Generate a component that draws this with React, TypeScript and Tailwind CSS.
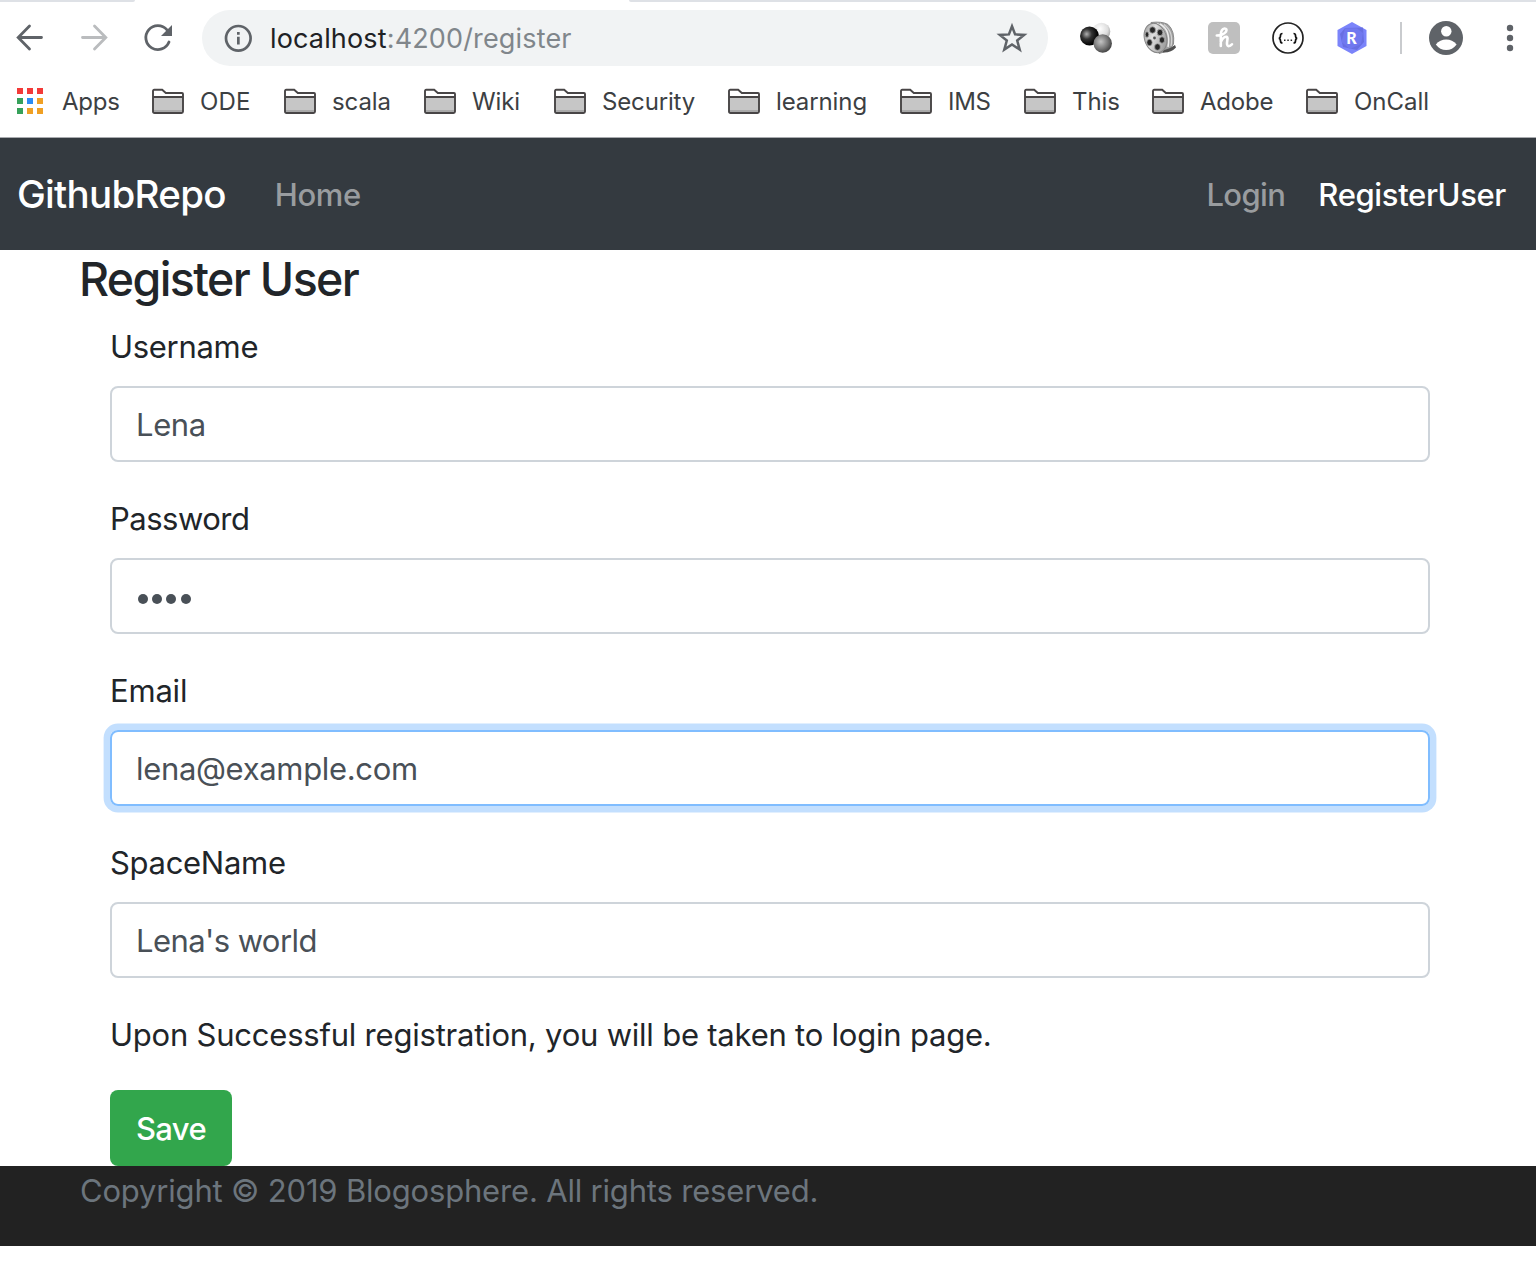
import React from "react";

const folders = [
  { name: "ODE", slot: "w-[132px]", text: "tracking-[0.2px]" },
  { name: "scala", slot: "w-[140px]", text: "tracking-[-0.1px]" },
  { name: "Wiki", slot: "w-[130px]", text: "tracking-[-0.1px]" },
  { name: "Security", slot: "w-[174px]", text: "tracking-[-0.15px]" },
  { name: "learning", slot: "w-[172px]", text: "tracking-[-0.1px]" },
  { name: "IMS", slot: "w-[124px]", text: "tracking-[-0.3px]" },
  { name: "This", slot: "w-[128px]", text: "tracking-[-0.1px]" },
  { name: "Adobe", slot: "w-[154px]", text: "tracking-[-0.2px]" },
  { name: "OnCall", slot: "w-[140px]", text: "tracking-[0px]" },
];

function FolderIcon() {
  return (
    <svg width="32" height="26" viewBox="0 0 32 26" className="shrink-0">
      <path d="M1 23V3Q1 1.800 2.200 1.800H10L14 5H29.500Q31 5 31 6.500V23Q31 25 29.500 25H2.500Q1 25 1 23Z" fill="#fff" />
      <path d="M1 9H31V24H1Z" fill="#c6c6c6" />
      <path d="M1 22H31V24H1Z" fill="#a9a9a9" />
      <path d="M1 9H31M1 23.500V3Q1 1.800 2.200 1.800H10.200L13.800 5H30Q31 5 31 6V23.500Q31 25 29.500 25H2.500Q1 25 1 23.500Z" fill="none" stroke="#484546" strokeWidth="1.900" />
    </svg>
  );
}

const dots = ["#f33a38", "#f33a38", "#f33a38", "#36a15a", "#2b8cf5", "#f0a024", "#36a15a", "#f0a024", "#f0a024"];

function AppsIcon() {
  return (
    <svg width="26" height="26" viewBox="0 0 26 26" className="shrink-0">
      {dots.map((c, i) => (
        <rect key={i} x={(i % 3) * 10} y={Math.floor(i / 3) * 10} width="6" height="6" fill={c} />
      ))}
    </svg>
  );
}

function Spheres() {
  return (
    <svg width="32" height="32" viewBox="0 0 32 32">
      <defs>
        <radialGradient id="s1" cx="0.35" cy="0.4" r="0.6"><stop offset="0" stopColor="#b0b0b0" /><stop offset="0.45" stopColor="#333" /><stop offset="1" stopColor="#000" /></radialGradient>
        <radialGradient id="s2" cx="0.4" cy="0.35" r="0.65"><stop offset="0" stopColor="#fff" /><stop offset="0.7" stopColor="#ddd" /><stop offset="1" stopColor="#aaa" /></radialGradient>
        <radialGradient id="s3" cx="0.4" cy="0.4" r="0.65"><stop offset="0" stopColor="#c4c4c4" /><stop offset="0.6" stopColor="#777" /><stop offset="1" stopColor="#3c3c3c" /></radialGradient>
      </defs>
      <circle cx="21.500" cy="9.500" r="8.800" fill="url(#s2)" />
      <circle cx="9.500" cy="14" r="9.500" fill="url(#s1)" />
      <circle cx="22.700" cy="21.500" r="9.200" fill="url(#s3)" />
    </svg>
  );
}

function FilmReel() {
  return (
    <svg width="34" height="34" viewBox="0 0 34 34">
      <defs>
        <linearGradient id="reel" x1="0" y1="0" x2="1" y2="1"><stop offset="0" stopColor="#8c8c8c" /><stop offset="0.4" stopColor="#e0e0e0" /><stop offset="1" stopColor="#858585" /></linearGradient>
      </defs>
      <path d="M8 1.500Q19 .2 25 3.500Q32 10 30.500 23Q27 30 16 32.500Z" fill="#a0a0a0" stroke="#8a8a8a" strokeWidth="1" />
      <path d="M17 3Q28 9 25 26M14 2.500Q24 7 22.500 24" fill="none" stroke="#ededed" strokeWidth="1.500" />
      <path d="M21 3.500Q31 11 28 25" fill="none" stroke="#d4d4d4" strokeWidth="1.200" />
      <path d="M20 29.500Q27 28 32 24L33 26.500Q28 32 20 31.500Z" fill="#505050" />
      <ellipse cx="12.500" cy="17" rx="11" ry="15" transform="rotate(-18 12.500 17)" fill="url(#reel)" stroke="#858585" strokeWidth="1" />
      <g fill="#262626" stroke="#a5a5a5" strokeWidth="0.800">
        <ellipse cx="9.500" cy="9" rx="3" ry="3.200" /><ellipse cx="17" cy="11.500" rx="2.800" ry="3.200" />
        <ellipse cx="19" cy="19" rx="2.600" ry="3.200" /><ellipse cx="14.500" cy="26" rx="2.900" ry="3.300" />
        <ellipse cx="6.500" cy="21.500" rx="2.700" ry="3.200" /><ellipse cx="4" cy="13.500" rx="1.800" ry="2.800" />
      </g>
      <circle cx="11.500" cy="17" r="1.400" fill="#555" />
    </svg>
  );
}

function HoneyIcon() {
  return (
    <svg width="32" height="32" viewBox="0 0 32 32">
      <rect width="32" height="32" rx="5" fill="#bfbfbf" />
      <path d="M8.800 13.500Q15 13.500 18 9.800Q19.500 6.500 16.500 6.500Q13 6.800 12.800 13V24M12.800 20Q15.500 14.500 18.500 14.800Q20 15.500 19.300 18.500Q18.300 23.800 20.500 24.200Q22.500 24.200 24 22.300" fill="none" stroke="#fff" strokeWidth="2.600" strokeLinecap="round" strokeLinejoin="round" />
    </svg>
  );
}

function BracesIcon() {
  return (
    <svg width="32" height="32" viewBox="0 0 32 32">
      <circle cx="16" cy="16" r="15" fill="#fff" stroke="#222" strokeWidth="1.700" />
      <path d="M10.500 11.500Q8.500 11.500 8.500 13.500Q8.500 16 6.800 16.300Q8.500 16.500 8.500 19Q8.500 21 10.500 21M21.500 11.500Q23.500 11.500 23.500 13.500Q23.500 16 25.200 16.300Q23.500 16.500 23.500 19Q23.500 21 21.500 21" fill="none" stroke="#111" strokeWidth="1.700" />
      <path d="M12 17.500h1.500v1.500h-1.500zM15.300 17.500h1.500v1.500h-1.500zM18.600 17.500h1.500v1.500h-1.500z" fill="#222" />
    </svg>
  );
}

function HexIcon() {
  return (
    <svg width="30" height="32" viewBox="0 0 30 32">
      <path d="M15 0L29.500 8V24L15 32L.5 24V8Z" fill="#7b84fa" />
      <path d="M8 6L26 5.500L27 20L20 28L6 25L3 12Z" fill="#686fe2" />
      <path d="M8 6.500L20 6.500L26 11L24 22L13 27L4.500 20Z" fill="#7078ef" />
      <text x="14.500" y="21.500" textAnchor="middle" fontFamily="Lato" fontWeight="900" fontSize="16" fill="#fff">R</text>
    </svg>
  );
}

function BrowserChrome() {
  return (
    <header className="h-[138px] border-b border-[#a9abaf] bg-white">
      <div className="flex h-[2px] justify-between">
        <div className="w-[135px] rounded-br-[6px] bg-[#dee1e6]" />
        <div className="w-[907px] rounded-bl-[6px] bg-[#dee1e6]" />
      </div>
      <div className="flex h-[72px] items-center">
        <svg width="202" height="72" viewBox="0 2 202 72" className="shrink-0" fill="none" strokeWidth="2.800" strokeLinecap="round">
          <path d="M41.500 37.500H18.500M29.500 26L18.200 37.500L29.500 49" stroke="#5f6368" />
          <path d="M82.500 37.500H105.500M94.500 26L105.800 37.500L94.500 49" stroke="#babcbe" />
          <path d="M169 42A12 12 0 1 1 167 29.800" stroke="#5f6368" />
          <path d="M172 25V36H161Z" fill="#5f6368" />
        </svg>
        <div className="flex h-14 w-[846px] shrink-0 items-center rounded-full bg-[#f1f3f4] pl-[22px] pr-5">
          <svg width="28" height="28" viewBox="0 0 28 28" className="shrink-0">
            <circle cx="14.300" cy="14.300" r="12.300" fill="none" stroke="#5f6368" strokeWidth="2.700" />
            <path d="M13 8h2.700v2.800h-2.700zM13 12.800h2.700v7.700h-2.700z" fill="#5f6368" />
          </svg>
          <span className="ml-[18px] pt-[2px] text-[27px] leading-[54px] tracking-[0.15px] text-[#202124]">
            localhost<span className="text-[#80868b]">:4200/register</span>
          </span>
          <svg width="32" height="32" viewBox="0 0 32 32" className="ml-auto">
            <path d="M16 4.200L19.100 12.400L28.200 12.900L21.200 18.500L23.700 27.600L16 22.400L8.300 27.600L10.800 18.500L3.800 12.900L12.900 12.400Z" fill="none" stroke="#5f6368" strokeWidth="2.500" />
          </svg>
        </div>
        <div className="ml-8 flex items-center">
          <div className="w-[63px]"><Spheres /></div>
          <div className="w-[65px]"><FilmReel /></div>
          <div className="w-16"><HoneyIcon /></div>
          <div className="w-[65px]"><BracesIcon /></div>
          <HexIcon />
          <div className="ml-[33px] h-8 w-[2px] bg-[#c9cbce]" />
          <svg width="34" height="34" viewBox="0 0 34 34" className="ml-[27px]">
            <circle cx="17" cy="17" r="17" fill="#5f6368" />
            <circle cx="17.300" cy="10.200" r="5.200" fill="#fff" />
            <path d="M6.800 23.500Q11 18.500 17.200 18.500T27.600 23.500Q23.500 29 17.200 29T6.800 23.500Z" fill="#fff" />
          </svg>
          <svg width="8" height="32" viewBox="0 0 8 32" className="ml-[43px]">
            <circle cx="4" cy="6" r="3.200" fill="#5f6368" /><circle cx="4" cy="16" r="3.200" fill="#5f6368" /><circle cx="4" cy="26" r="3.200" fill="#5f6368" />
          </svg>
        </div>
      </div>
      <nav className="flex h-[54px] items-center pl-[17px] text-[24px] leading-9 text-[#3c4043]">
        <div className="flex w-[135px] items-center gap-[19px]">
          <AppsIcon />
          <span className="pt-[2px] tracking-[-0.2px]">Apps</span>
        </div>
        {folders.map((f) => (
          <div key={f.name} className={`flex shrink-0 items-center gap-4 ${f.slot}`}>
            <FolderIcon />
            <span className={`pt-[2px] ${f.text}`}>{f.name}</span>
          </div>
        ))}
      </nav>
    </header>
  );
}

type FieldProps = { label: string; value: string; tracking: string; valueTracking?: string; type?: string; focused?: boolean };

function Field({ label, value, tracking, valueTracking = "", type = "text", focused = false }: FieldProps) {
  const ring = focused ? "border-[#80bdff] shadow-[0_0_0_6.4px_#c3dffe]" : "border-[#ced4da]";
  return (
    <div className="mb-8">
      <label className={`mb-4 block h-12 leading-[50px] ${tracking}`}>{label}</label>
      <div className={`h-[76px] rounded-lg border-2 pl-6 leading-[74px] text-[#495057] ${ring} ${valueTracking}`}>
        {type === "password" ? (
          <div className="flex h-full items-center gap-[4.200px] pl-[2px] pt-[6px]">
            {Array.from(value).map((_, i) => (
              <span key={i} className="size-[10px] rounded-full bg-[#495057]" />
            ))}
          </div>
        ) : (
          value
        )}
      </div>
    </div>
  );
}

export default function App() {
  return (
    <div className="min-h-[1274px] w-[1536px] overflow-hidden bg-white font-['Inter',sans-serif] text-[31px] text-[#212529]">
      <BrowserChrome />
      <nav className="flex h-28 items-center bg-[#343a40] pl-[17px] pr-[30px] leading-[112px] text-[#999c9f]">
        <span className="text-[38.500px] font-[450] tracking-[-0.7px] text-white">GithubRepo</span>
        <span className="ml-[49px] pt-[2px] font-[450] tracking-[-0.4px]">Home</span>
        <span className="ml-auto pt-[2px] font-[450] tracking-[-0.6px]">Login</span>
        <span className="ml-[33px] pt-[2px] font-[450] tracking-[-0.35px] text-white">RegisterUser</span>
      </nav>
      <main className="px-20">
        <h3 className="-ml-px mb-4 h-14 text-[46.500px] font-medium leading-[59px] tracking-[-1.620px]">Register User</h3>
        <form className="pl-[30px] pr-[26px]">
          <Field label="Username" value="Lena" tracking="tracking-[-0.3px]" valueTracking="tracking-[-0.4px]" />
          <Field label="Password" value="1234" type="password" tracking="tracking-[-0.5px]" />
          <Field label="Email" value="lena@example.com" focused tracking="tracking-[-0.2px]" valueTracking="tracking-[-0.33px]" />
          <Field label="SpaceName" value="Lena's world" tracking="tracking-[-0.3px]" valueTracking="tracking-[-0.58px]" />
          <p className="mb-8 h-12 leading-[50px] tracking-[-0.22px]">Upon Successful registration, you will be taken to login page.</p>
          <button type="button" className="block h-[76px] w-[122px] rounded-lg bg-[#32a64c] pt-[2px] font-[450] tracking-[-0.6px] text-white">Save</button>
        </form>
      </main>
      <footer className="h-20 bg-[#222] pl-20 leading-[50px] tracking-[-0.180px] text-[#6c757d]">Copyright © 2019 Blogosphere. All rights reserved.</footer>
    </div>
  );
}
